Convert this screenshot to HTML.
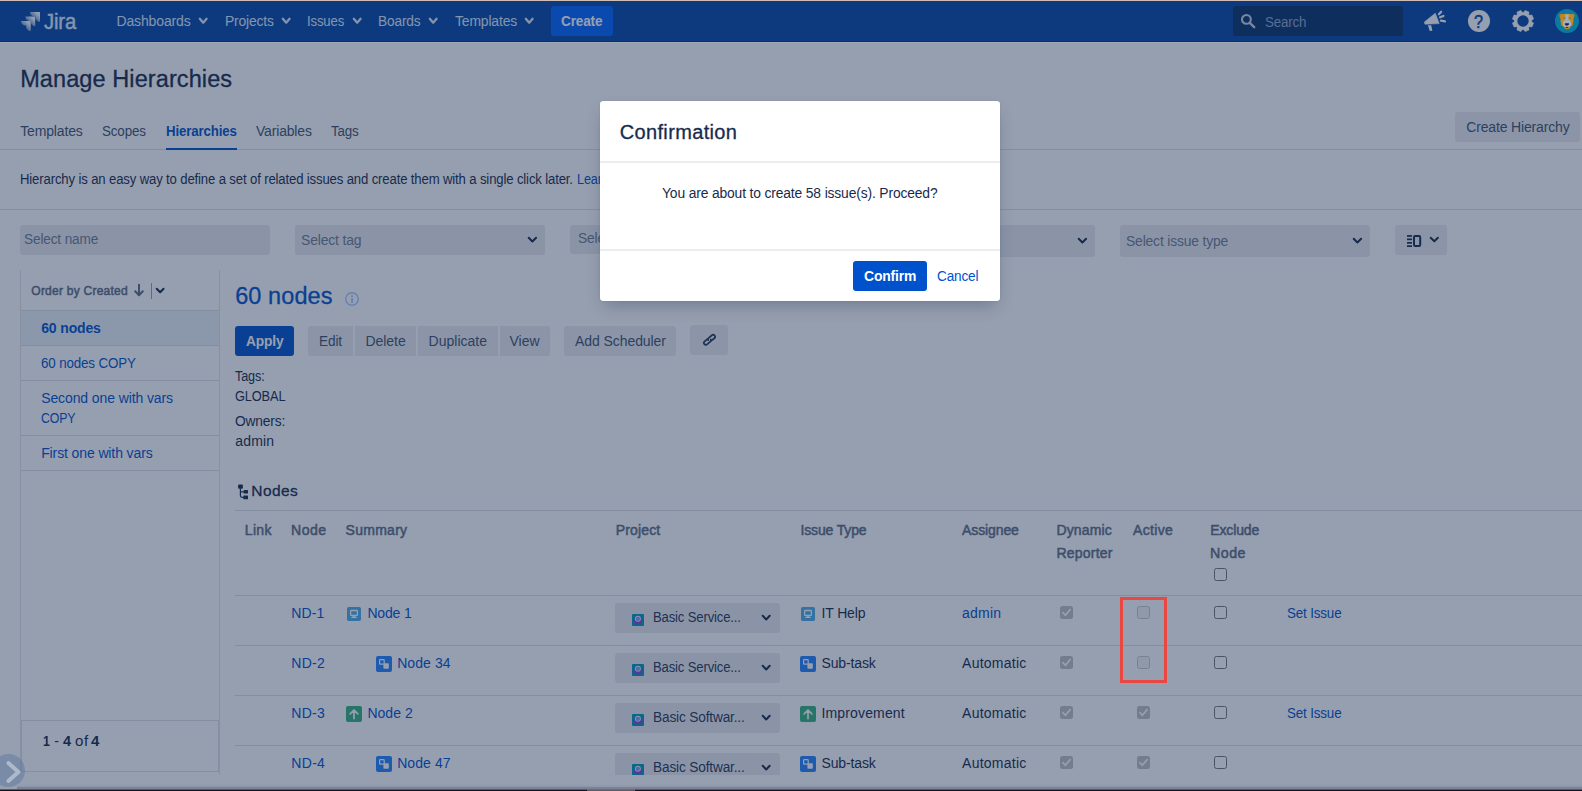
<!DOCTYPE html>
<html lang="en">
<head>
<meta charset="utf-8">
<title>Manage Hierarchies - Jira</title>
<style>
*{box-sizing:border-box;margin:0;padding:0}
html,body{width:1582px;height:791px;overflow:hidden;background:#fff}
body{font-family:"Liberation Sans",sans-serif;font-size:14px;color:#172B4D;position:relative}
.t{position:absolute;white-space:nowrap;line-height:16px;display:block;transform-origin:0 50%}
.b{position:absolute}
.hr{position:absolute;height:1px;background:#DFE1E6}
.btn{position:absolute;background:#EBEDF0;border-radius:3px}
.inp{position:absolute;background:#EBECF0;border-radius:3px}
svg{position:absolute;overflow:visible}
#page{position:absolute;left:0;top:0;width:1582px;height:791px;overflow:hidden}
#blanket{position:absolute;left:0;top:0;width:1582px;height:791px;background:rgba(23,43,77,0.45)}
#dlg{position:absolute;left:600px;top:101px;width:400px;height:200px;background:#fff;border-radius:3px;box-shadow:0 8px 16px -4px rgba(9,30,66,.27),0 0 1px rgba(9,30,66,.33)}
.cb{position:absolute;width:13px;height:13px;border-radius:2.5px}
.cb.en{border:1px solid #767676;background:#fff}
.cb.du{border:1px solid #C9C9C9;background:#F4F4F4}
.cb.dc{background:#C2C2C4}
</style>
</head>
<body>
<div id="page">
<header>
<div class="b" style="left:0;top:1px;width:1582px;height:40px;background:#0747A6"></div>
<div class="b" style="left:0;top:41px;width:1582px;height:1px;background:#1F2F52"></div>
<svg style="left:20px;top:11px" width="21" height="21" viewBox="0 0 21 21">
<defs><linearGradient id="jg" x1="1" y1="0" x2="0.25" y2="0.75"><stop offset="0.3" stop-color="#F4F8FF"/><stop offset="1" stop-color="#DEEBFF" stop-opacity="0.3"/></linearGradient></defs>
<path fill="url(#jg)" d="M10 1 H20 V10.8 A4.6 4.6 0 0 1 15.4 6.2 V5.6 H14.6 A4.6 4.6 0 0 1 10 1Z"/>
<path fill="url(#jg)" d="M5.4 5.5 H15.2 V15.2 A4.6 4.6 0 0 1 10.6 10.6 V10.1 H10 A4.6 4.6 0 0 1 5.4 5.5Z"/>
<path fill="url(#jg)" d="M0.9 10 H10.7 V20 A4.6 4.6 0 0 1 6.1 15.4 V14.6 H5.5 A4.6 4.6 0 0 1 0.9 10Z"/>
</svg>
<span class="t" style="left:44.40px;top:14.00px;font-size:22px;color:#DEEBFF;letter-spacing:-0.150px;transform:scaleX(0.9199);-webkit-text-stroke:0.45px #DEEBFF;">Jira</span>
<span class="t" style="left:116.50px;top:13.00px;font-size:14px;color:#DEEBFF;letter-spacing:-0.144px;">Dashboards</span>
<svg style="left:199px;top:18.0px" width="8.4" height="5.7" viewBox="0 0 8.4 5.7"><path d="M0.8049999999999999 0.8049999999999999 L4.2 4.6535 L7.595000000000001 0.8049999999999999" fill="none" stroke="#DEEBFF" stroke-width="2.3" stroke-linecap="round" stroke-linejoin="round"/></svg>
<span class="t" style="left:224.50px;top:13.00px;font-size:14px;color:#DEEBFF;letter-spacing:-0.150px;transform:scaleX(0.9893);">Projects</span>
<svg style="left:281.7px;top:18.0px" width="8.4" height="5.7" viewBox="0 0 8.4 5.7"><path d="M0.8049999999999999 0.8049999999999999 L4.2 4.6535 L7.595000000000001 0.8049999999999999" fill="none" stroke="#DEEBFF" stroke-width="2.3" stroke-linecap="round" stroke-linejoin="round"/></svg>
<span class="t" style="left:307.20px;top:13.00px;font-size:14px;color:#DEEBFF;letter-spacing:-0.150px;transform:scaleX(0.9366);">Issues</span>
<svg style="left:352.5px;top:18.0px" width="8.4" height="5.7" viewBox="0 0 8.4 5.7"><path d="M0.8049999999999999 0.8049999999999999 L4.2 4.6535 L7.595000000000001 0.8049999999999999" fill="none" stroke="#DEEBFF" stroke-width="2.3" stroke-linecap="round" stroke-linejoin="round"/></svg>
<span class="t" style="left:378.10px;top:13.00px;font-size:14px;color:#DEEBFF;letter-spacing:-0.150px;transform:scaleX(0.9769);">Boards</span>
<svg style="left:428.8px;top:18.0px" width="8.4" height="5.7" viewBox="0 0 8.4 5.7"><path d="M0.8049999999999999 0.8049999999999999 L4.2 4.6535 L7.595000000000001 0.8049999999999999" fill="none" stroke="#DEEBFF" stroke-width="2.3" stroke-linecap="round" stroke-linejoin="round"/></svg>
<span class="t" style="left:454.60px;top:13.00px;font-size:14px;color:#DEEBFF;letter-spacing:-0.150px;transform:scaleX(0.9934);">Templates</span>
<svg style="left:524.9px;top:18.0px" width="8.4" height="5.7" viewBox="0 0 8.4 5.7"><path d="M0.8049999999999999 0.8049999999999999 L4.2 4.6535 L7.595000000000001 0.8049999999999999" fill="none" stroke="#DEEBFF" stroke-width="2.3" stroke-linecap="round" stroke-linejoin="round"/></svg>
<div class="b" style="left:551px;top:6px;width:62px;height:30px;border-radius:3px;background:#0065FF"></div>
<span class="t" style="left:561.30px;top:13.00px;font-size:14px;font-weight:700;color:#FFFFFF;letter-spacing:-0.150px;transform:scaleX(0.9686);">Create</span>
<div class="b" style="left:1233px;top:6px;width:170px;height:30px;border-radius:3px;background:#09326C"></div>
<svg style="left:1240px;top:13px" width="16" height="16" viewBox="0 0 16 16"><circle cx="6.4" cy="6.4" r="4.4" fill="none" stroke="#C7D3EA" stroke-width="2.1"/><path d="M9.8 9.8 L14.2 14.2" stroke="#C7D3EA" stroke-width="2.4" stroke-linecap="round"/></svg>
<span class="t" style="left:1264.90px;top:14.00px;font-size:14px;color:#8FA5CC;letter-spacing:-0.150px;transform:scaleX(0.9516);">Search</span>
<svg style="left:1420px;top:8px" width="28" height="26" viewBox="0 0 28 26" fill="#FFFFFF">
<path d="M4.3 14.1 L15.3 5.2 L19.2 15.6 L5 16.2 Z" stroke="#FFFFFF" stroke-width="0.6" stroke-linejoin="round"/>
<path d="M7.9 17.2 L11.2 17.2 L12.4 22.8 L9.7 23 Z"/>
<path d="M18.9 6.3 L21.2 3.7 M20.1 9.3 L23.5 7.9 M20.9 12.7 L25 13.4" stroke="#FFFFFF" stroke-width="2.2" stroke-linecap="round" fill="none"/>
</svg>
<div class="b" style="left:1468px;top:10px;width:22px;height:22px;border-radius:11px;background:#FFFFFF"></div>
<span class="t" style="left:1474.40px;top:13.70px;font-size:18.5px;color:#0747A6;letter-spacing:-0.150px;transform:scaleX(0.8771);-webkit-text-stroke:0.5px #0747A6;">?</span>
<svg style="left:1512.1px;top:9.9px" width="22" height="22" viewBox="-11 -11 22 22"><g fill="#FFFFFF" stroke="#FFFFFF" stroke-width="0.5" stroke-linejoin="round"><path d="M-2.8 -8 L-2.1 -10.6 H2.1 L2.8 -8 Z" transform="rotate(22.5)"/><path d="M-2.8 -8 L-2.1 -10.6 H2.1 L2.8 -8 Z" transform="rotate(67.5)"/><path d="M-2.8 -8 L-2.1 -10.6 H2.1 L2.8 -8 Z" transform="rotate(112.5)"/><path d="M-2.8 -8 L-2.1 -10.6 H2.1 L2.8 -8 Z" transform="rotate(157.5)"/><path d="M-2.8 -8 L-2.1 -10.6 H2.1 L2.8 -8 Z" transform="rotate(202.5)"/><path d="M-2.8 -8 L-2.1 -10.6 H2.1 L2.8 -8 Z" transform="rotate(247.5)"/><path d="M-2.8 -8 L-2.1 -10.6 H2.1 L2.8 -8 Z" transform="rotate(292.5)"/><path d="M-2.8 -8 L-2.1 -10.6 H2.1 L2.8 -8 Z" transform="rotate(337.5)"/></g><circle r="7.25" fill="none" stroke="#FFFFFF" stroke-width="3.1"/></svg>
</header>
<section>
<span class="t" style="left:20.20px;top:71.00px;font-size:23.5px;letter-spacing:0.094px;-webkit-text-stroke:0.3px #172B4D;">Manage Hierarchies</span>
<span class="t" style="left:20.20px;top:123.00px;font-size:14px;color:#42526E;letter-spacing:-0.150px;">Templates</span>
<span class="t" style="left:101.90px;top:123.00px;font-size:14px;color:#42526E;letter-spacing:-0.150px;transform:scaleX(0.9575);">Scopes</span>
<span class="t" style="left:256.10px;top:123.00px;font-size:14px;color:#42526E;letter-spacing:-0.150px;transform:scaleX(0.9959);">Variables</span>
<span class="t" style="left:331.20px;top:123.00px;font-size:14px;color:#42526E;letter-spacing:-0.150px;transform:scaleX(0.9544);">Tags</span>
<span class="t" style="left:166.10px;top:123.00px;font-size:14px;font-weight:700;color:#0052CC;letter-spacing:-0.150px;transform:scaleX(0.9468);">Hierarchies</span>
<div class="hr" style="left:0;top:149px;width:1582px"></div>
<div class="b" style="left:166px;top:148px;width:71px;height:2px;background:#0052CC"></div>
<div class="btn" style="left:1455px;top:112px;width:125px;height:30px"></div>
<span class="t" style="left:1466.20px;top:119.00px;font-size:14px;color:#42526E;letter-spacing:-0.150px;">Create Hierarchy</span>
<span class="t" style="left:20.20px;top:171.00px;font-size:14px;letter-spacing:-0.150px;transform:scaleX(0.9379);">Hierarchy is an easy way to define a set of related issues and create them with a single click later.</span>
<span class="t" style="left:577.00px;top:171.00px;font-size:14px;color:#0052CC;letter-spacing:-0.150px;transform:scaleX(0.9040);">Learn more</span>
<div class="hr" style="left:0;top:209px;width:1582px"></div>
<div class="inp" style="left:20px;top:225px;width:250px;height:30px"></div>
<span class="t" style="left:23.80px;top:231.00px;font-size:14px;color:#6F7B90;letter-spacing:-0.150px;transform:scaleX(0.9734);">Select name</span>
<div class="inp" style="left:295px;top:225px;width:250px;height:30px"></div>
<span class="t" style="left:300.90px;top:232.00px;font-size:14px;color:#6F7B90;letter-spacing:-0.150px;transform:scaleX(0.9948);">Select tag</span>
<svg style="left:528.2px;top:236.8px" width="8.8" height="5.4" viewBox="0 0 8.8 5.4"><path d="M0.7 0.7 L4.4 4.49 L8.100000000000001 0.7" fill="none" stroke="#172B4D" stroke-width="2" stroke-linecap="round" stroke-linejoin="round"/></svg>
<div class="inp" style="left:570px;top:225px;width:250px;height:29px"></div>
<span class="t" style="left:578.00px;top:230.00px;font-size:14px;color:#6F7B90;letter-spacing:-0.150px;transform:scaleX(0.9870);">Select scope</span>
<div class="inp" style="left:845px;top:225px;width:250px;height:32px"></div>
<span class="t" style="left:850.90px;top:233.00px;font-size:14px;color:#6F7B90;letter-spacing:-0.018px;">Select project</span>
<svg style="left:1078.2px;top:238px" width="8.8" height="5.4" viewBox="0 0 8.8 5.4"><path d="M0.7 0.7 L4.4 4.49 L8.100000000000001 0.7" fill="none" stroke="#172B4D" stroke-width="2" stroke-linecap="round" stroke-linejoin="round"/></svg>
<div class="inp" style="left:1120px;top:225px;width:250px;height:32px"></div>
<span class="t" style="left:1125.70px;top:233.00px;font-size:14px;color:#6F7B90;letter-spacing:-0.150px;transform:scaleX(0.9889);">Select issue type</span>
<svg style="left:1353.3px;top:238px" width="8.8" height="5.4" viewBox="0 0 8.8 5.4"><path d="M0.7 0.7 L4.4 4.49 L8.100000000000001 0.7" fill="none" stroke="#172B4D" stroke-width="2" stroke-linecap="round" stroke-linejoin="round"/></svg>
<div class="btn" style="left:1395px;top:225px;width:52px;height:30px"></div>
<svg style="left:1407px;top:235px" width="15" height="12" viewBox="0 0 15 12"><rect x="0" y="0.1" width="5" height="1.7" fill="#172B4D"/><rect x="0" y="3.5" width="5" height="1.7" fill="#172B4D"/><rect x="0" y="7" width="5" height="1.7" fill="#172B4D"/><rect x="0" y="10.3" width="5" height="1.7" fill="#172B4D"/><rect x="7" y="1" width="6.2" height="10" rx="1.2" fill="none" stroke="#172B4D" stroke-width="2"/></svg>
<svg style="left:1430.3px;top:237.4px" width="8.6" height="5.2" viewBox="0 0 8.6 5.2"><path d="M0.7 0.7 L4.3 4.29 L7.8999999999999995 0.7" fill="none" stroke="#172B4D" stroke-width="2" stroke-linecap="round" stroke-linejoin="round"/></svg>
</section>
<aside>
<div class="b" style="left:20px;top:270px;width:1px;height:501px;background:#E4E6EA"></div>
<div class="b" style="left:219px;top:270px;width:1px;height:505px;background:#E4E6EA"></div>
<span class="t" style="left:31.30px;top:283.00px;font-size:12px;color:#5E6C84;letter-spacing:0.245px;-webkit-text-stroke:0.5px #5E6C84;">Order by Created</span>
<svg style="left:134px;top:284px" width="10" height="12.4" viewBox="0 0 10 12.4"><path d="M5 0.8 V10.6 M1.2 7.2 L5 11.2 L8.8 7.2" fill="none" stroke="#5E6C84" stroke-width="2" stroke-linecap="round" stroke-linejoin="round"/></svg>
<div class="b" style="left:151px;top:283px;width:1px;height:16px;background:#97A0AF"></div>
<svg style="left:156px;top:288.4px" width="8.3" height="5.2" viewBox="0 0 8.3 5.2"><path d="M0.7 0.7 L4.15 4.29 L7.6000000000000005 0.7" fill="none" stroke="#172B4D" stroke-width="2" stroke-linecap="round" stroke-linejoin="round"/></svg>
<div class="hr" style="left:21px;top:310px;width:198px"></div>
<div class="b" style="left:21px;top:311px;width:198px;height:34px;background:#EBF2F9"></div>
<span class="t" style="left:41.20px;top:320.00px;font-size:14px;font-weight:700;color:#0052CC;letter-spacing:-0.143px;">60 nodes</span>
<div class="hr" style="left:21px;top:345px;width:198px"></div>
<span class="t" style="left:41.20px;top:355.00px;font-size:14px;color:#0052CC;letter-spacing:-0.150px;transform:scaleX(0.9540);">60 nodes COPY</span>
<div class="hr" style="left:21px;top:380px;width:198px"></div>
<span class="t" style="left:41.20px;top:390.00px;font-size:14px;color:#0052CC;letter-spacing:-0.103px;">Second one with vars</span>
<span class="t" style="left:41.20px;top:410.00px;font-size:14px;color:#0052CC;letter-spacing:-0.150px;transform:scaleX(0.8818);">COPY</span>
<div class="hr" style="left:21px;top:435px;width:198px"></div>
<span class="t" style="left:41.20px;top:445.00px;font-size:14px;color:#0052CC;letter-spacing:-0.116px;">First one with vars</span>
<div class="hr" style="left:21px;top:470px;width:198px"></div>
<div class="b" style="left:21px;top:720px;width:198px;height:52px;border:1px solid #DFE1E6"></div>
<span class="t" style="left:42.70px;top:733.00px;font-size:14px;font-weight:700;letter-spacing:-0.150px;transform:scaleX(0.8762);">1</span>
<span class="t" style="left:54.30px;top:733.00px;font-size:14px;letter-spacing:0.428px;">-</span>
<span class="t" style="left:62.90px;top:733.00px;font-size:14px;font-weight:700;letter-spacing:0.500px;transform:scaleX(1.0365);">4</span>
<span class="t" style="left:75.40px;top:733.00px;font-size:14px;letter-spacing:0.500px;transform:scaleX(1.0749);">of</span>
<span class="t" style="left:91.30px;top:733.00px;font-size:14px;font-weight:700;letter-spacing:0.500px;transform:scaleX(1.0727);">4</span>
</aside>
<main>
<span class="t" style="left:235.20px;top:288.00px;font-size:23.5px;color:#0052CC;letter-spacing:0.085px;-webkit-text-stroke:0.3px #0052CC;">60 nodes</span>
<svg style="left:345px;top:292px" width="14" height="14" viewBox="0 0 14 14"><circle cx="7" cy="7" r="6.3" fill="none" stroke="#A9CBFF" stroke-width="1.4"/><rect x="6.1" y="3.3" width="1.9" height="1.7" fill="#A9CBFF"/><rect x="6.1" y="6.1" width="1.9" height="4.8" fill="#A9CBFF"/></svg>
<div class="b" style="left:235px;top:326px;width:59px;height:30px;border-radius:3px;background:#0052CC"></div>
<span class="t" style="left:245.90px;top:333.00px;font-size:14px;font-weight:700;color:#FFFFFF;letter-spacing:-0.150px;transform:scaleX(0.9820);">Apply</span>
<div class="btn" style="left:308px;top:326px;width:45px;height:30px;border-radius:3px 0 0 3px"></div>
<span class="t" style="left:319.40px;top:333.00px;font-size:14px;color:#42526E;letter-spacing:-0.150px;transform:scaleX(0.9757);">Edit</span>
<div class="btn" style="left:355px;top:326px;width:61px;height:30px;border-radius:0"></div>
<span class="t" style="left:365.50px;top:333.00px;font-size:14px;color:#42526E;letter-spacing:-0.054px;">Delete</span>
<div class="btn" style="left:418px;top:326px;width:80px;height:30px;border-radius:0"></div>
<span class="t" style="left:428.60px;top:333.00px;font-size:14px;color:#42526E;">Duplicate</span>
<div class="btn" style="left:500px;top:326px;width:50px;height:30px;border-radius:0 3px 3px 0"></div>
<span class="t" style="left:509.50px;top:333.00px;font-size:14px;color:#42526E;letter-spacing:-0.031px;">View</span>
<div class="btn" style="left:564px;top:326px;width:112px;height:30px"></div>
<span class="t" style="left:575.00px;top:333.00px;font-size:14px;color:#42526E;letter-spacing:-0.070px;">Add Scheduler</span>
<div class="btn" style="left:690px;top:325px;width:38px;height:30px"></div>
<svg style="left:700px;top:331px" width="19" height="18" viewBox="-9.5 -9 19 18"><g fill="none" stroke="#253858" stroke-width="1.7" stroke-linecap="round" transform="translate(0 -0.2) rotate(-40)">
<path d="M-0.9 -1.95 H-4.75 A1.95 1.95 0 0 0 -4.75 1.95 H-0.65 A1.95 1.95 0 0 0 1.2 0.6"/>
<path d="M0.9 1.95 H4.75 A1.95 1.95 0 0 0 4.75 -1.95 H0.65 A1.95 1.95 0 0 0 -1.2 -0.6"/></g></svg>
<span class="t" style="left:235.30px;top:368.00px;font-size:14px;letter-spacing:-0.150px;transform:scaleX(0.9036);">Tags:</span>
<span class="t" style="left:234.90px;top:388.00px;font-size:14px;letter-spacing:-0.150px;transform:scaleX(0.9135);">GLOBAL</span>
<span class="t" style="left:235.20px;top:413.00px;font-size:14px;letter-spacing:-0.150px;transform:scaleX(0.9819);">Owners:</span>
<span class="t" style="left:235.20px;top:433.00px;font-size:14px;letter-spacing:0.190px;">admin</span>
<svg style="left:238px;top:484px" width="11" height="16" viewBox="0 0 11 16"><rect x="0.1" y="0.4" width="4.8" height="4.4" rx="1" fill="#172B4D"/><path d="M2.4 4.6 V11.6 Q2.4 13.4 4.2 13.4 H6 M2.4 7.9 H6" fill="none" stroke="#172B4D" stroke-width="1.2"/><rect x="5.7" y="6.1" width="4.3" height="3.5" rx="0.6" fill="#172B4D"/><rect x="5.4" y="11.4" width="4.6" height="3.9" rx="0.6" fill="#172B4D"/></svg>
<span class="t" style="left:251.30px;top:483.00px;font-size:15.5px;letter-spacing:0.422px;-webkit-text-stroke:0.3px #172B4D;">Nodes</span>
<div class="hr" style="left:235px;top:510px;width:1347px"></div>
<div class="b" style="left:0;top:0;width:1582px;height:775px;overflow:hidden"><span class="t" style="left:244.80px;top:522.00px;font-size:14px;color:#5E6C84;letter-spacing:0.337px;-webkit-text-stroke:0.5px #5E6C84;">Link</span>
<span class="t" style="left:291.00px;top:522.00px;font-size:14px;color:#5E6C84;letter-spacing:0.500px;transform:scaleX(1.0066);-webkit-text-stroke:0.5px #5E6C84;">Node</span>
<span class="t" style="left:345.60px;top:522.00px;font-size:14px;color:#5E6C84;letter-spacing:0.266px;-webkit-text-stroke:0.5px #5E6C84;">Summary</span>
<span class="t" style="left:615.70px;top:522.00px;font-size:14px;color:#5E6C84;letter-spacing:0.154px;-webkit-text-stroke:0.5px #5E6C84;">Project</span>
<span class="t" style="left:800.50px;top:522.00px;font-size:14px;color:#5E6C84;letter-spacing:-0.150px;-webkit-text-stroke:0.5px #5E6C84;">Issue Type</span>
<span class="t" style="left:962.10px;top:522.00px;font-size:14px;color:#5E6C84;letter-spacing:-0.113px;-webkit-text-stroke:0.5px #5E6C84;">Assignee</span>
<span class="t" style="left:1056.40px;top:522.00px;font-size:14px;color:#5E6C84;letter-spacing:0.139px;-webkit-text-stroke:0.5px #5E6C84;">Dynamic</span>
<span class="t" style="left:1056.40px;top:545.00px;font-size:14px;color:#5E6C84;letter-spacing:0.233px;-webkit-text-stroke:0.5px #5E6C84;">Reporter</span>
<span class="t" style="left:1133.00px;top:522.00px;font-size:14px;color:#5E6C84;letter-spacing:0.355px;-webkit-text-stroke:0.5px #5E6C84;">Active</span>
<span class="t" style="left:1210.30px;top:522.00px;font-size:14px;color:#5E6C84;letter-spacing:-0.150px;-webkit-text-stroke:0.5px #5E6C84;">Exclude</span>
<span class="t" style="left:1210.30px;top:545.00px;font-size:14px;color:#5E6C84;letter-spacing:0.500px;transform:scaleX(1.0123);-webkit-text-stroke:0.5px #5E6C84;">Node</span>
<div class="cb en" style="left:1214px;top:568px"></div>
<div class="hr" style="left:235px;top:595px;width:1347px"></div>
<span class="t" style="left:291.30px;top:605.00px;font-size:14px;color:#0052CC;letter-spacing:0.076px;">ND-1</span>
<svg style="left:347px;top:607px" width="14" height="14" viewBox="0 0 14 14"><rect width="14" height="14" rx="1.8" fill="#4BAEE8"/><rect x="3.6" y="3.5" width="6.8" height="4.9" rx="0.5" fill="none" stroke="#fff" stroke-width="1.3"/><rect x="5.4" y="9" width="3.2" height="0.9" fill="#fff"/><rect x="4.2" y="10" width="5.6" height="1" fill="#fff"/></svg>
<span class="t" style="left:367.40px;top:605.00px;font-size:14px;color:#0052CC;letter-spacing:-0.150px;">Node 1</span>
<div class="inp" style="left:615px;top:603px;width:165px;height:30px"></div>
<svg style="left:632px;top:614px" width="12" height="12" viewBox="0 0 12 12"><rect width="12" height="12" rx="1" fill="#0098BC"/><path d="M1.7 5.2 Q1.6 9.2 3.8 9.5 L3.5 10.2 H8.5 L8.2 9.5 Q10.6 9.2 10.5 5.2 Z" fill="#8E44D8"/><circle cx="5.9" cy="4.7" r="3" fill="#E4E8FA"/><circle cx="5.9" cy="4.8" r="2.1" fill="#62A4EE"/><circle cx="5.9" cy="4.8" r="0.9" fill="#B392E4"/></svg>
<span class="t" style="left:652.60px;top:609.00px;font-size:14px;color:#253858;letter-spacing:-0.150px;transform:scaleX(0.9338);">Basic Service...</span>
<svg style="left:762.4px;top:615.3px" width="8.4" height="5.4" viewBox="0 0 8.4 5.4"><path d="M0.7 0.7 L4.2 4.49 L7.7 0.7" fill="none" stroke="#172B4D" stroke-width="2" stroke-linecap="round" stroke-linejoin="round"/></svg>
<svg style="left:801px;top:607px" width="14" height="14" viewBox="0 0 14 14"><rect width="14" height="14" rx="1.8" fill="#4BAEE8"/><rect x="3.6" y="3.5" width="6.8" height="4.9" rx="0.5" fill="none" stroke="#fff" stroke-width="1.3"/><rect x="5.4" y="9" width="3.2" height="0.9" fill="#fff"/><rect x="4.2" y="10" width="5.6" height="1" fill="#fff"/></svg>
<span class="t" style="left:821.50px;top:605.00px;font-size:14px;letter-spacing:-0.146px;">IT Help</span>
<span class="t" style="left:962.10px;top:605.00px;font-size:14px;color:#0052CC;letter-spacing:0.190px;">admin</span>
<div class="cb dc" style="left:1060px;top:606px"><svg style="left:0;top:0" width="13" height="13" viewBox="0 0 13 13"><path d="M3 6.8 L5.4 9.2 L10 3.8" fill="none" stroke="#fff" stroke-width="1.7" stroke-linecap="square"/></svg></div>
<div class="cb du" style="left:1137px;top:606px"></div>
<div class="cb en" style="left:1214px;top:606px"></div>
<span class="t" style="left:1287.20px;top:605.00px;font-size:14px;color:#0052CC;letter-spacing:-0.150px;transform:scaleX(0.9550);">Set Issue</span>
<div class="hr" style="left:235px;top:645px;width:1347px"></div>
<span class="t" style="left:291.30px;top:655.00px;font-size:14px;color:#0052CC;letter-spacing:0.243px;">ND-2</span>
<svg style="left:376px;top:656px" width="16" height="16" viewBox="0 0 16 16"><rect width="16" height="16" rx="2" fill="#2684FF"/><rect x="7.4" y="7.3" width="5.4" height="5.4" rx="0.6" fill="#fff"/><rect x="3.6" y="3.6" width="4.6" height="4.6" rx="0.6" fill="#2684FF" stroke="#fff" stroke-width="1.2"/></svg>
<span class="t" style="left:397.20px;top:655.00px;font-size:14px;color:#0052CC;letter-spacing:0.077px;">Node 34</span>
<div class="inp" style="left:615px;top:653px;width:165px;height:30px"></div>
<svg style="left:632px;top:664px" width="12" height="12" viewBox="0 0 12 12"><rect width="12" height="12" rx="1" fill="#0098BC"/><path d="M1.7 5.2 Q1.6 9.2 3.8 9.5 L3.5 10.2 H8.5 L8.2 9.5 Q10.6 9.2 10.5 5.2 Z" fill="#8E44D8"/><circle cx="5.9" cy="4.7" r="3" fill="#E4E8FA"/><circle cx="5.9" cy="4.8" r="2.1" fill="#62A4EE"/><circle cx="5.9" cy="4.8" r="0.9" fill="#B392E4"/></svg>
<span class="t" style="left:652.60px;top:659.00px;font-size:14px;color:#253858;letter-spacing:-0.150px;transform:scaleX(0.9338);">Basic Service...</span>
<svg style="left:762.4px;top:665.3px" width="8.4" height="5.4" viewBox="0 0 8.4 5.4"><path d="M0.7 0.7 L4.2 4.49 L7.7 0.7" fill="none" stroke="#172B4D" stroke-width="2" stroke-linecap="round" stroke-linejoin="round"/></svg>
<svg style="left:800px;top:656px" width="16" height="16" viewBox="0 0 16 16"><rect width="16" height="16" rx="2" fill="#2684FF"/><rect x="7.4" y="7.3" width="5.4" height="5.4" rx="0.6" fill="#fff"/><rect x="3.6" y="3.6" width="4.6" height="4.6" rx="0.6" fill="#2684FF" stroke="#fff" stroke-width="1.2"/></svg>
<span class="t" style="left:821.50px;top:655.00px;font-size:14px;letter-spacing:-0.136px;">Sub-task</span>
<span class="t" style="left:962.10px;top:655.00px;font-size:14px;letter-spacing:0.244px;">Automatic</span>
<div class="cb dc" style="left:1060px;top:656px"><svg style="left:0;top:0" width="13" height="13" viewBox="0 0 13 13"><path d="M3 6.8 L5.4 9.2 L10 3.8" fill="none" stroke="#fff" stroke-width="1.7" stroke-linecap="square"/></svg></div>
<div class="cb du" style="left:1137px;top:656px"></div>
<div class="cb en" style="left:1214px;top:656px"></div>
<div class="hr" style="left:235px;top:695px;width:1347px"></div>
<span class="t" style="left:291.30px;top:705.00px;font-size:14px;color:#0052CC;letter-spacing:0.243px;">ND-3</span>
<svg style="left:346px;top:706px" width="16" height="16" viewBox="0 0 16 16"><rect width="16" height="16" rx="2" fill="#36B37E"/><path d="M8 12.6 V4.6 M4.2 7.8 L8 4 L11.8 7.8" fill="none" stroke="#fff" stroke-width="1.7" stroke-linecap="round" stroke-linejoin="round"/></svg>
<span class="t" style="left:367.40px;top:705.00px;font-size:14px;color:#0052CC;letter-spacing:0.029px;">Node 2</span>
<div class="inp" style="left:615px;top:703px;width:165px;height:30px"></div>
<svg style="left:632px;top:714px" width="12" height="12" viewBox="0 0 12 12"><rect width="12" height="12" rx="1" fill="#0098BC"/><path d="M1.7 5.2 Q1.6 9.2 3.8 9.5 L3.5 10.2 H8.5 L8.2 9.5 Q10.6 9.2 10.5 5.2 Z" fill="#8E44D8"/><circle cx="5.9" cy="4.7" r="3" fill="#E4E8FA"/><circle cx="5.9" cy="4.8" r="2.1" fill="#62A4EE"/><circle cx="5.9" cy="4.8" r="0.9" fill="#B392E4"/></svg>
<span class="t" style="left:652.60px;top:709.00px;font-size:14px;color:#253858;letter-spacing:-0.150px;transform:scaleX(0.9742);">Basic Softwar...</span>
<svg style="left:762.4px;top:715.3px" width="8.4" height="5.4" viewBox="0 0 8.4 5.4"><path d="M0.7 0.7 L4.2 4.49 L7.7 0.7" fill="none" stroke="#172B4D" stroke-width="2" stroke-linecap="round" stroke-linejoin="round"/></svg>
<svg style="left:800px;top:706px" width="16" height="16" viewBox="0 0 16 16"><rect width="16" height="16" rx="2" fill="#36B37E"/><path d="M8 12.6 V4.6 M4.2 7.8 L8 4 L11.8 7.8" fill="none" stroke="#fff" stroke-width="1.7" stroke-linecap="round" stroke-linejoin="round"/></svg>
<span class="t" style="left:821.50px;top:705.00px;font-size:14px;letter-spacing:0.150px;">Improvement</span>
<span class="t" style="left:962.10px;top:705.00px;font-size:14px;letter-spacing:0.244px;">Automatic</span>
<div class="cb dc" style="left:1060px;top:706px"><svg style="left:0;top:0" width="13" height="13" viewBox="0 0 13 13"><path d="M3 6.8 L5.4 9.2 L10 3.8" fill="none" stroke="#fff" stroke-width="1.7" stroke-linecap="square"/></svg></div>
<div class="cb dc" style="left:1137px;top:706px"><svg style="left:0;top:0" width="13" height="13" viewBox="0 0 13 13"><path d="M3 6.8 L5.4 9.2 L10 3.8" fill="none" stroke="#fff" stroke-width="1.7" stroke-linecap="square"/></svg></div>
<div class="cb en" style="left:1214px;top:706px"></div>
<span class="t" style="left:1287.20px;top:705.00px;font-size:14px;color:#0052CC;letter-spacing:-0.150px;transform:scaleX(0.9550);">Set Issue</span>
<div class="hr" style="left:235px;top:745px;width:1347px"></div>
<span class="t" style="left:291.30px;top:755.00px;font-size:14px;color:#0052CC;letter-spacing:0.309px;">ND-4</span>
<svg style="left:376px;top:756px" width="16" height="16" viewBox="0 0 16 16"><rect width="16" height="16" rx="2" fill="#2684FF"/><rect x="7.4" y="7.3" width="5.4" height="5.4" rx="0.6" fill="#fff"/><rect x="3.6" y="3.6" width="4.6" height="4.6" rx="0.6" fill="#2684FF" stroke="#fff" stroke-width="1.2"/></svg>
<span class="t" style="left:397.20px;top:755.00px;font-size:14px;color:#0052CC;letter-spacing:0.077px;">Node 47</span>
<div class="inp" style="left:615px;top:753px;width:165px;height:30px"></div>
<svg style="left:632px;top:764px" width="12" height="12" viewBox="0 0 12 12"><rect width="12" height="12" rx="1" fill="#0098BC"/><path d="M1.7 5.2 Q1.6 9.2 3.8 9.5 L3.5 10.2 H8.5 L8.2 9.5 Q10.6 9.2 10.5 5.2 Z" fill="#8E44D8"/><circle cx="5.9" cy="4.7" r="3" fill="#E4E8FA"/><circle cx="5.9" cy="4.8" r="2.1" fill="#62A4EE"/><circle cx="5.9" cy="4.8" r="0.9" fill="#B392E4"/></svg>
<span class="t" style="left:652.60px;top:759.00px;font-size:14px;color:#253858;letter-spacing:-0.150px;transform:scaleX(0.9742);">Basic Softwar...</span>
<svg style="left:762.4px;top:765.3px" width="8.4" height="5.4" viewBox="0 0 8.4 5.4"><path d="M0.7 0.7 L4.2 4.49 L7.7 0.7" fill="none" stroke="#172B4D" stroke-width="2" stroke-linecap="round" stroke-linejoin="round"/></svg>
<svg style="left:800px;top:756px" width="16" height="16" viewBox="0 0 16 16"><rect width="16" height="16" rx="2" fill="#2684FF"/><rect x="7.4" y="7.3" width="5.4" height="5.4" rx="0.6" fill="#fff"/><rect x="3.6" y="3.6" width="4.6" height="4.6" rx="0.6" fill="#2684FF" stroke="#fff" stroke-width="1.2"/></svg>
<span class="t" style="left:821.50px;top:755.00px;font-size:14px;letter-spacing:-0.136px;">Sub-task</span>
<span class="t" style="left:962.10px;top:755.00px;font-size:14px;letter-spacing:0.244px;">Automatic</span>
<div class="cb dc" style="left:1060px;top:756px"><svg style="left:0;top:0" width="13" height="13" viewBox="0 0 13 13"><path d="M3 6.8 L5.4 9.2 L10 3.8" fill="none" stroke="#fff" stroke-width="1.7" stroke-linecap="square"/></svg></div>
<div class="cb dc" style="left:1137px;top:756px"><svg style="left:0;top:0" width="13" height="13" viewBox="0 0 13 13"><path d="M3 6.8 L5.4 9.2 L10 3.8" fill="none" stroke="#fff" stroke-width="1.7" stroke-linecap="square"/></svg></div>
<div class="cb en" style="left:1214px;top:756px"></div></div>
</main>
</div>
<div id="blanket"></div>
<div class="b" style="left:0;top:0;width:1582px;height:1px;background:#D0BEB6"></div>
<div class="b" style="left:0;top:42px;width:1582px;height:1px;background:rgba(255,255,255,0.1)"></div>
<svg style="left:1555px;top:9px" width="24" height="24" viewBox="0 0 24 24">
<circle cx="12" cy="12" r="12" fill="#0C7A9E"/>
<path d="M4.2 6.4 Q4.4 4.6 6.2 4.7 L8.6 5.4 L8 9.4 L5.4 10 Z M19.8 6.4 Q19.6 4.6 17.8 4.7 L15.4 5.4 L16 9.4 L18.6 10 Z" fill="#C27A22"/>
<path d="M6.4 5.4 Q12 4.2 17.6 5.4 L18.5 12 L17.6 16.6 L15 17.8 L14.9 19.4 Q12 21 9.6 19.4 L9 17.8 L6.4 16.6 L5.5 12 Z" fill="#C18A25"/>
<path d="M10.1 5.6 H13.9 L13.3 9 L13.6 10.8 L16 12.6 V17.2 L14.6 17.7 H9.4 L8 17.2 V12.6 L10.4 10.8 L10.7 9 Z" fill="#A3ADC2"/>
<rect x="8.2" y="8" width="1.3" height="2" fill="#7A7A58"/><rect x="14.5" y="8" width="1.3" height="2" fill="#7A7A58"/>
<path d="M9.9 14.2 H13.9 V15.4 L12.8 16.4 H11 L9.9 15.4 Z" fill="#16264A"/>
<rect x="10.9" y="18.1" width="2.3" height="0.8" fill="#16264A"/>
</svg>
<div class="b" style="left:-8.5px;top:753.5px;width:33px;height:33.5px;border-radius:17px;background:rgba(98,122,160,0.55)"></div>
<svg style="left:5px;top:759px" width="18" height="26" viewBox="0 0 18 26"><path d="M3.4 4 L13.4 13 L3.4 22" fill="none" stroke="#AFB9CC" stroke-width="3.9" stroke-linecap="round" stroke-linejoin="round"/></svg>
<div class="b" style="left:17px;top:784px;width:1565px;height:3px;background:linear-gradient(#97A0B1,#8C96AA)"></div>
<div class="b" style="left:17px;top:787px;width:1565px;height:2px;background:#78829A"></div>
<div class="b" style="left:0;top:789px;width:1582px;height:1px;background:#545B6C"></div>
<div class="b" style="left:0;top:790px;width:1582px;height:1px;background:#141519"></div>
<div class="b" style="left:587px;top:789px;width:48px;height:1px;background:#6A6E78"></div>
<div class="b" style="left:587px;top:790px;width:48px;height:1px;background:#5E5E5E"></div>
<div class="b" style="left:1120px;top:597px;width:47px;height:86px;border:3px solid #E8483F"></div>
<section role="dialog" aria-label="Confirmation">
<div id="dlg"></div>
<span class="t" style="left:619.70px;top:124.00px;font-size:20px;letter-spacing:0.355px;-webkit-text-stroke:0.3px #172B4D;">Confirmation</span>
<div class="b" style="left:600px;top:161px;width:400px;height:2px;background:#EBECF0"></div>
<span class="t" style="left:661.70px;top:185.00px;font-size:14px;letter-spacing:-0.150px;transform:scaleX(0.9896);">You are about to create 58 issue(s). Proceed?</span>
<div class="b" style="left:600px;top:249px;width:400px;height:2px;background:#EBECF0"></div>
<div class="b" style="left:853px;top:261px;width:74px;height:30px;border-radius:3px;background:#0052CC"></div>
<span class="t" style="left:863.70px;top:268.00px;font-size:14px;font-weight:700;color:#FFFFFF;letter-spacing:-0.150px;transform:scaleX(0.9930);">Confirm</span>
<span class="t" style="left:937.30px;top:268.00px;font-size:14px;color:#0052CC;letter-spacing:-0.150px;transform:scaleX(0.9686);">Cancel</span>
</section>
</body>
</html>
